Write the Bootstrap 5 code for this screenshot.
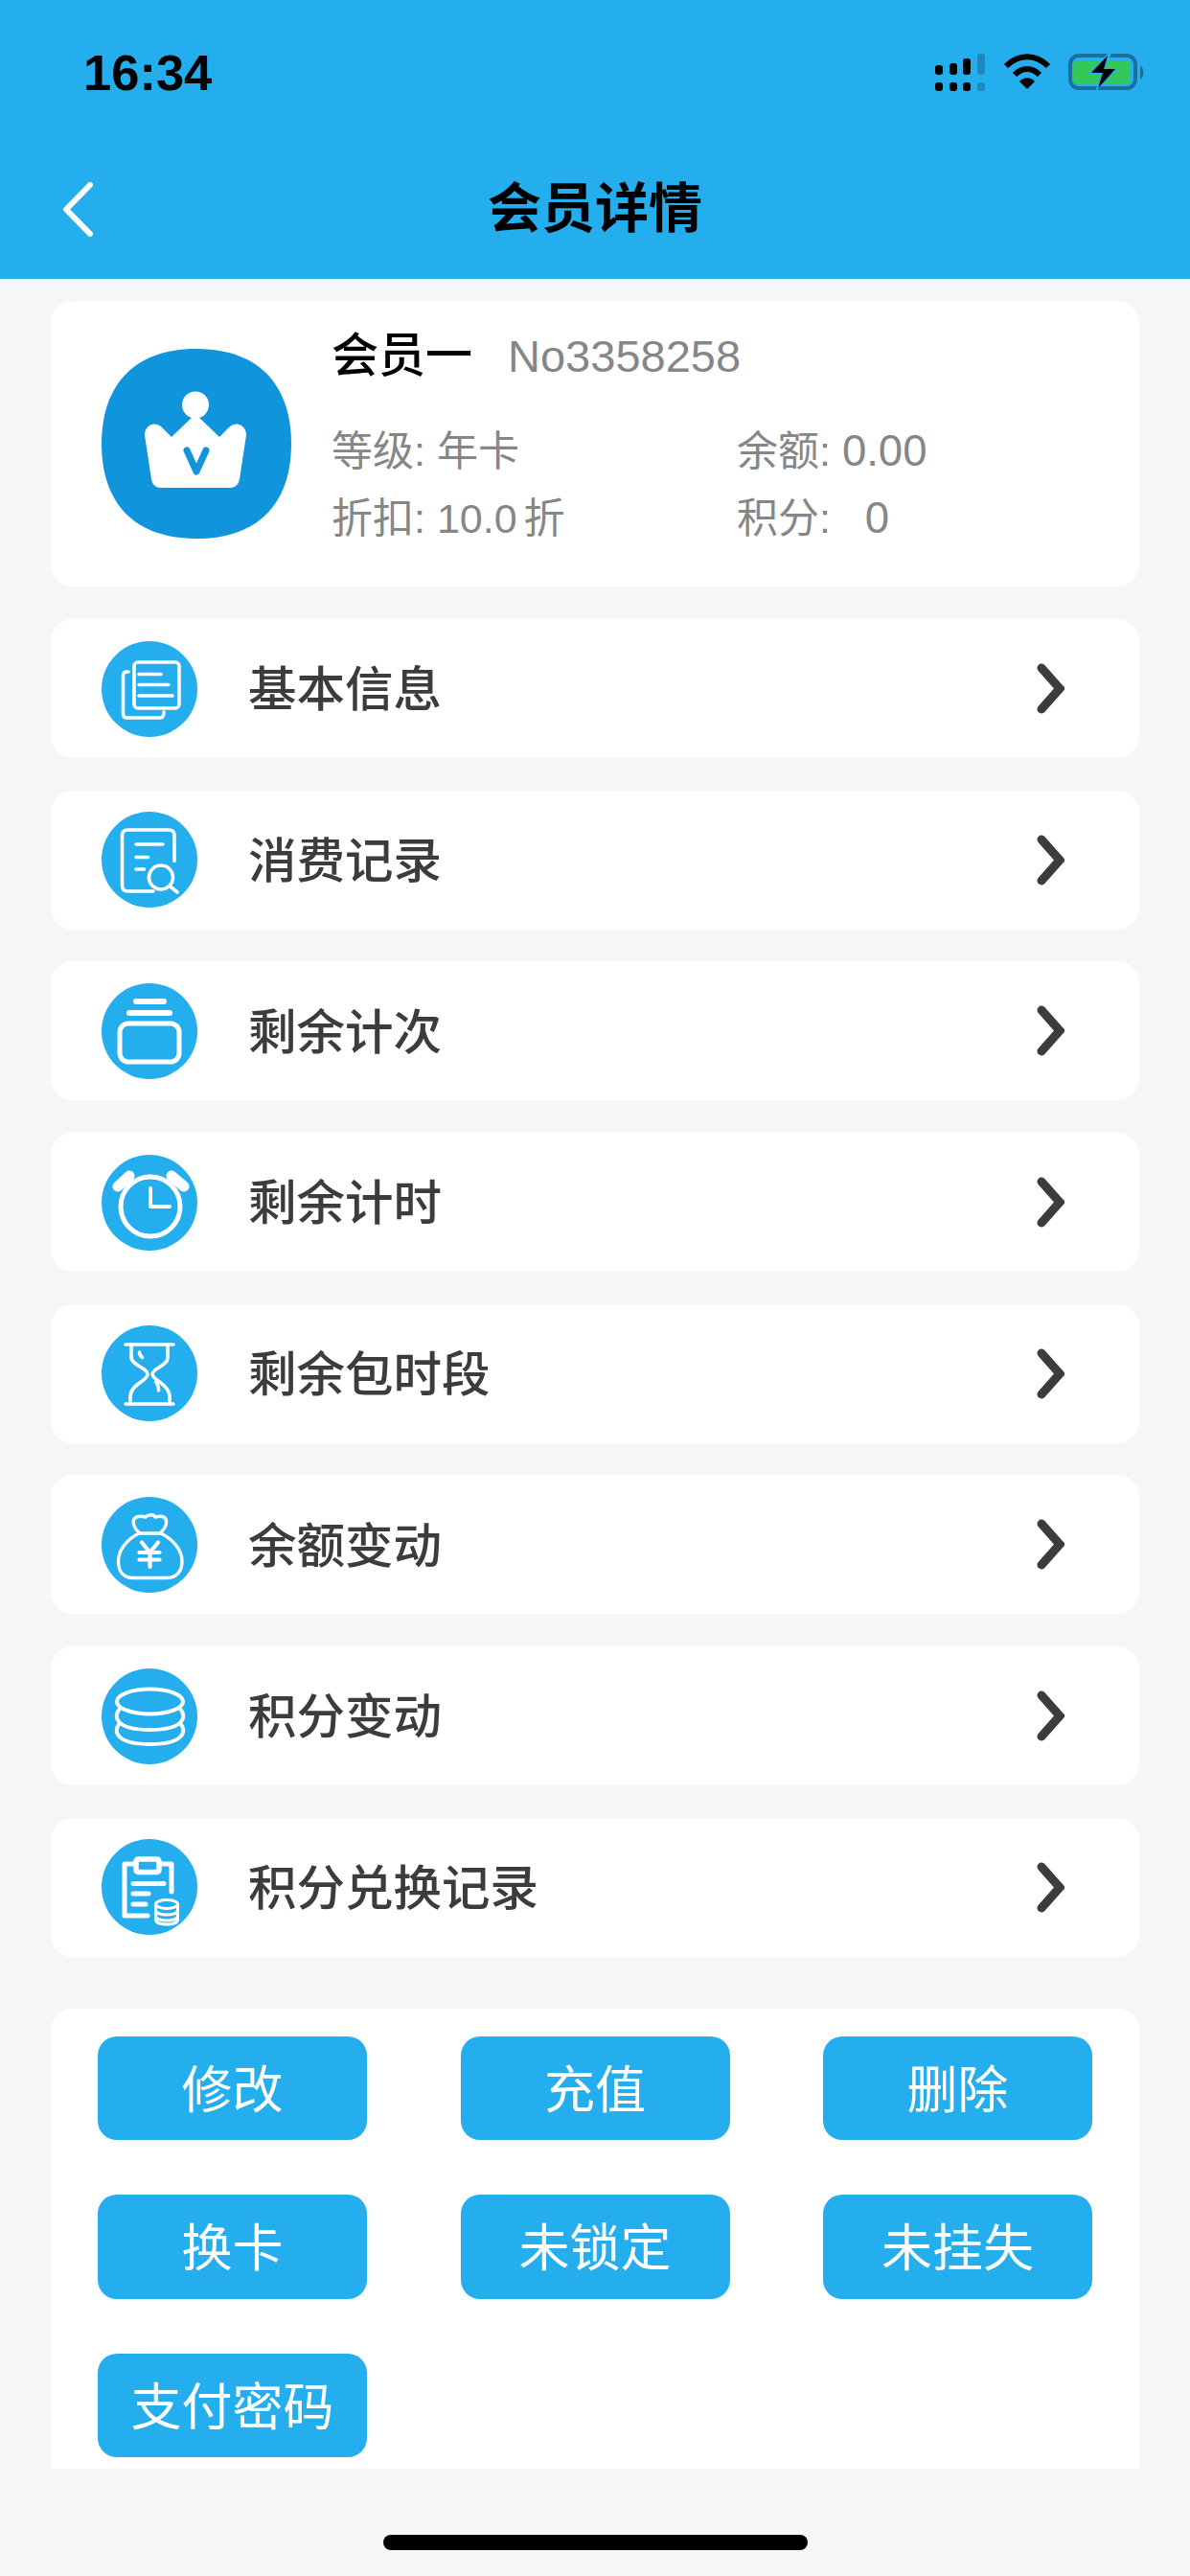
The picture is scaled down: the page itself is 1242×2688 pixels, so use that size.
<!DOCTYPE html>
<html lang="zh-CN">
<head>
  <meta charset="UTF-8">
  <title>会员详情</title>
  <meta name="viewport" content="width=device-width, initial-scale=1">
  <link href="https://cdn.jsdelivr.net/npm/bootstrap@5.3.0/dist/css/bootstrap.min.css" rel="stylesheet">
  <style>
    body {
      font-family: "Liberation Sans", "Noto Sans CJK SC", sans-serif;
      background: #f5f6f8;
      height: 2688px;
      overflow: hidden;
    }
    .top-head { background: #25aeee; height: 291px; }
    .status-row { height: 145px; padding: 54px 45px 0 87px; }
    .clock-text { font-size: 52.5px; line-height: 44px; font-weight: 700; color: #000; }
    .status-icons { width: 222px; height: 42px; }
    .nav-row { height: 146px; }
    .back-icon { width: 33px; height: 57px; margin-left: 65px; }
    .head-title { font-size: 56px; font-weight: 700; color: #000; margin-right: 98px; line-height: 1; }
    .page-body { padding: 23px 53px 0; }
    .info-card, .menu-card { border: 0; border-radius: 23px; background: #fff; }
    .info-card { height: 298px; margin-bottom: 34px; padding: 50px 0 0 53px; }
    .vip-icon { width: 198px; height: 198px; flex: none; margin-right: 42px; }
    .vip-name { font-size: 49px; line-height: 56px; color: #000; font-weight: 500; margin-top: -21px; }
    .vip-no { font-size: 47px; color: #868686; margin-left: 37px; font-weight: 400; }
    .vip-grid { display: grid; grid-template-columns: 423px 1fr; row-gap: 12px; margin-top: 42px; font-size: 43px; line-height: 58px; color: #868686; }
    .vip-num { font-size: 45.5px; }
    .vip-unit { margin-left: -5px; }
    .menu-card { height: 145px; margin-bottom: 33.7px; padding: 0 78px 0 53px; }
    .menu-icon { width: 100px; height: 100px; flex: none; margin-right: 53px; }
    .menu-label { font-size: 50.5px; color: #3c3c3c; font-weight: 500; padding-top: 3px; }
    .arrow-icon { width: 29px; height: 53px; }
    .action-card { height: 480px; margin-top: 20px; padding: 29px 49px 0; background: #fff; border-radius: 23px 23px 0 0; }
    .action-grid { display: grid; grid-template-columns: repeat(3, 281px); justify-content: space-between; row-gap: 57px; }
    .action-btn { height: 108.5px; padding: 5px 0 0; background: #25aeee; border: 0; border-radius: 20px; color: #fff; font-size: 53px; line-height: 103px; }
    .home-bar { width: 443px; height: 16px; margin: 69px auto 0; background: #000; border-radius: 8px; }
    .ico-line { fill: none; stroke: #fff; stroke-linecap: round; stroke-linejoin: round; }
  </style>
</head>
<body>

<div class="top-head">
  <div class="status-row d-flex justify-content-between align-items-start">
    <span class="clock-text">16:34</span>
    <svg class="status-icons" viewBox="975 55 222 42">
      <g fill="#000">
        <rect x="976" y="69" width="8" height="10" rx="3"/><rect x="991" y="67" width="8" height="12" rx="3"/><rect x="1005" y="62" width="8" height="17" rx="3"/>
        <rect x="976" y="87" width="8" height="9" rx="3"/><rect x="991" y="87" width="8" height="9" rx="3"/><rect x="1005" y="87" width="8" height="9" rx="3"/>
      </g>
      <g fill="#1d88bf"><rect x="1020" y="57" width="8" height="22" rx="3"/><rect x="1020" y="87" width="8" height="9" rx="3"/></g>
      <g fill="none" stroke="#000" stroke-width="6">
        <path d="M1050 70 C1063 57 1081 57 1094 70"/>
        <path d="M1059 79 C1067 71 1077 71 1085 79"/>
      </g>
      <path d="M1064 86 C1069 81 1075 81 1080 86 L1072 94Z" fill="#000"/>
      <rect x="1117" y="59" width="68" height="34" rx="9" fill="none" stroke="#1b6f9c" stroke-width="4"/>
      <rect x="1120" y="64" width="60" height="24" rx="4" fill="#34c759"/>
      <path d="M1190 69 C1194 72 1195 80 1190 84Z" fill="#1b6f9c"/>
      <path d="M1157 56 L1136 78 L1149 78 L1143 97 L1168 72 L1154 72 L1160 56Z" fill="#25aeee"/>
      <path d="M1156 59 L1139 77 L1151 77 L1146 93 L1164 73 L1152 73Z" fill="#000"/>
    </svg>
  </div>
  <div class="nav-row d-flex align-items-center">
    <svg class="back-icon" viewBox="0 0 33 57"><path class="ico-line" stroke-width="6" d="M29 3 L4 28.500 L29 54"/></svg>
    <div class="head-title flex-grow-1 text-center">会员详情</div>
  </div>
</div>

<div class="page-body d-flex flex-column">

  <div class="card info-card d-flex flex-row">
    <svg class="vip-icon" viewBox="0 0 198 198">
      <path d="M99 0 C168 0 198 42 198 99 C198 160 165 198 99 198 C33 198 0 160 0 99 C0 42 30 0 99 0Z" fill="#1094db"/>
      <ellipse cx="98" cy="58.500" rx="14" ry="14" fill="#fff"/>
      <path d="M98 68 L73 92 L62 81 C55 75 45 80 45 90 L52 136 C53 142 57 145 62 145 L134 145 C139 145 143 142 144 136 L151 90 C151 80 141 75 134 81 L123 92Z" fill="#fff"/>
      <path d="M89 106 L99 128 L109 106" fill="none" stroke="#1094db" stroke-width="7" stroke-linecap="round" stroke-linejoin="round"/>
    </svg>
    <div class="flex-grow-1">
      <div class="vip-name">会员一<span class="vip-no">No3358258</span></div>
      <div class="vip-grid">
        <div>等级: 年卡</div><div>余额: <span class="vip-num">0.00</span></div>
        <div>折扣: 10.0 <span class="vip-unit">折</span></div><div>积分:&nbsp;&nbsp; <span class="vip-num">0</span></div>
      </div>
    </div>
  </div>

  <div class="card menu-card d-flex flex-row align-items-center">
    <svg class="menu-icon" viewBox="0 0 100 100"><circle cx="50" cy="50" r="50" fill="#25aeee"/>
      <g class="ico-line" stroke-width="3.6">
        <rect x="34" y="22" width="47" height="48" rx="4"/>
        <path d="M39 34.500H62M39 45.500H70M39 57H74"/>
        <path d="M28 32H26.500C24 32 22.500 33.500 22.500 36V76C22.500 78.500 24 80 26.500 80H61C63.500 80 65 78.500 65 74"/>
      </g></svg>
    <div class="menu-label flex-grow-1">基本信息</div>
    <svg class="arrow-icon" viewBox="0 0 29 53"><path d="M5 5 L24 26.500 L5 48" fill="none" stroke="#3c3c3c" stroke-width="9" stroke-linecap="round"/></svg>
  </div>

  <div class="card menu-card d-flex flex-row align-items-center">
    <svg class="menu-icon" viewBox="0 0 100 100"><circle cx="50" cy="50" r="50" fill="#25aeee"/>
      <g class="ico-line" stroke-width="3.6">
        <path d="M76 51.500V25C76 21 74 19 70 19H27.500C23.500 19 21.500 21 21.500 25V77C21.500 81 23.500 83 27.500 83H54"/>
        <path d="M36 34H64M36 47.500H48.500M36 60H44.500"/>
        <circle cx="62" cy="68.500" r="12.500"/>
        <path d="M71 77.500L79 84"/>
      </g></svg>
    <div class="menu-label flex-grow-1">消费记录</div>
    <svg class="arrow-icon" viewBox="0 0 29 53"><path d="M5 5 L24 26.500 L5 48" fill="none" stroke="#3c3c3c" stroke-width="9" stroke-linecap="round"/></svg>
  </div>

  <div class="card menu-card d-flex flex-row align-items-center">
    <svg class="menu-icon" viewBox="0 0 100 100"><circle cx="50" cy="50" r="50" fill="#25aeee"/>
      <g class="ico-line">
        <path stroke-width="6" d="M36 19H65M29 31H71"/>
        <rect x="19" y="42" width="62" height="40" rx="9" stroke-width="5"/>
      </g></svg>
    <div class="menu-label flex-grow-1">剩余计次</div>
    <svg class="arrow-icon" viewBox="0 0 29 53"><path d="M5 5 L24 26.500 L5 48" fill="none" stroke="#3c3c3c" stroke-width="9" stroke-linecap="round"/></svg>
  </div>

  <div class="card menu-card d-flex flex-row align-items-center">
    <svg class="menu-icon" viewBox="0 0 100 100"><circle cx="50" cy="50" r="50" fill="#25aeee"/>
      <g class="ico-line">
        <circle cx="51" cy="54" r="31" stroke-width="5"/>
        <path stroke-width="4" d="M51 35V54H71"/>
        <path stroke-width="11" d="M17 33L29 22M73 22L86 33"/>
      </g></svg>
    <div class="menu-label flex-grow-1">剩余计时</div>
    <svg class="arrow-icon" viewBox="0 0 29 53"><path d="M5 5 L24 26.500 L5 48" fill="none" stroke="#3c3c3c" stroke-width="9" stroke-linecap="round"/></svg>
  </div>

  <div class="card menu-card d-flex flex-row align-items-center">
    <svg class="menu-icon" viewBox="0 0 100 100"><circle cx="50" cy="50" r="50" fill="#25aeee"/>
      <g class="ico-line" stroke-width="3.6">
        <path d="M25 20H75M25 82H75"/>
        <path d="M31 20V33C31 42 48 44 48 51C48 58 30 62 30 74V82"/>
        <path d="M69 20V34C69 42 53 45 53 51C53 57 71 62 71 74V82"/>
        <path d="M39.500 28C39.500 30 40.500 32 42.500 33.500M56.500 59C58.500 61 59.500 65 59.500 68"/>
      </g></svg>
    <div class="menu-label flex-grow-1">剩余包时段</div>
    <svg class="arrow-icon" viewBox="0 0 29 53"><path d="M5 5 L24 26.500 L5 48" fill="none" stroke="#3c3c3c" stroke-width="9" stroke-linecap="round"/></svg>
  </div>

  <div class="card menu-card d-flex flex-row align-items-center">
    <svg class="menu-icon" viewBox="0 0 100 100"><circle cx="50" cy="50" r="50" fill="#25aeee"/>
      <g class="ico-line" stroke-width="3.4">
        <path d="M39 37C34 33 32 27 34 23C37 19 42 20 46 21C48 19 54 17 56 21C60 20 65 19 67 23C69 28 66 33 62 37"/>
        <path d="M39 38H62M39 38C27 44 17.500 55 17.500 67C17.500 78 23 84.500 33 84.500H68C78 84.500 84 78 84 67C84 55 74 44 62 38"/>
        <path stroke-width="4.200" d="M42 47.500L50.500 58L59 47.500M39.500 58H60.500M39.500 65.500H60.500M50.500 58V73"/>
      </g></svg>
    <div class="menu-label flex-grow-1">余额变动</div>
    <svg class="arrow-icon" viewBox="0 0 29 53"><path d="M5 5 L24 26.500 L5 48" fill="none" stroke="#3c3c3c" stroke-width="9" stroke-linecap="round"/></svg>
  </div>

  <div class="card menu-card d-flex flex-row align-items-center">
    <svg class="menu-icon" viewBox="0 0 100 100"><circle cx="50" cy="50" r="50" fill="#25aeee"/>
      <g class="ico-line" stroke-width="4">
        <ellipse cx="50.500" cy="34.500" rx="34.500" ry="13"/>
        <path d="M19 42C12 50 14 64 50.500 64C87 64 89 50 82 42"/>
        <path d="M19 57C12 65 14 79 50.500 79C87 79 89 65 82 57"/>
      </g></svg>
    <div class="menu-label flex-grow-1">积分变动</div>
    <svg class="arrow-icon" viewBox="0 0 29 53"><path d="M5 5 L24 26.500 L5 48" fill="none" stroke="#3c3c3c" stroke-width="9" stroke-linecap="round"/></svg>
  </div>

  <div class="card menu-card d-flex flex-row align-items-center">
    <svg class="menu-icon" viewBox="0 0 100 100"><circle cx="50" cy="50" r="50" fill="#25aeee"/>
      <g class="ico-line" stroke-width="5">
        <path d="M36 26H24V80H48M61 26H73V55"/>
        <rect x="36" y="21" width="24" height="13.500" rx="2" stroke-width="5.500"/>
        <path d="M33 46.500H65M33 57H49M33 68H46"/>
      </g>
      <g class="ico-line" stroke-width="3">
        <ellipse cx="68" cy="68" rx="11.500" ry="4.500"/>
        <path d="M56.500 68V84C56.500 87 61 89 68 89C75 89 79.500 87 79.500 84V68M56.500 74C56.500 77 61 79 68 79C75 79 79.500 77 79.500 74M56.500 80C56.500 83 61 85 68 85C75 85 79.500 83 79.500 80"/>
      </g></svg>
    <div class="menu-label flex-grow-1">积分兑换记录</div>
    <svg class="arrow-icon" viewBox="0 0 29 53"><path d="M5 5 L24 26.500 L5 48" fill="none" stroke="#3c3c3c" stroke-width="9" stroke-linecap="round"/></svg>
  </div>

  <div class="action-card">
    <div class="action-grid">
      <button class="btn action-btn">修改</button>
      <button class="btn action-btn">充值</button>
      <button class="btn action-btn">删除</button>
      <button class="btn action-btn">换卡</button>
      <button class="btn action-btn">未锁定</button>
      <button class="btn action-btn">未挂失</button>
      <button class="btn action-btn">支付密码</button>
    </div>
  </div>
</div>

<div class="home-bar"></div>

<script src="https://cdn.jsdelivr.net/npm/bootstrap@5.3.0/dist/js/bootstrap.bundle.min.js"></script>
</body>
</html>
